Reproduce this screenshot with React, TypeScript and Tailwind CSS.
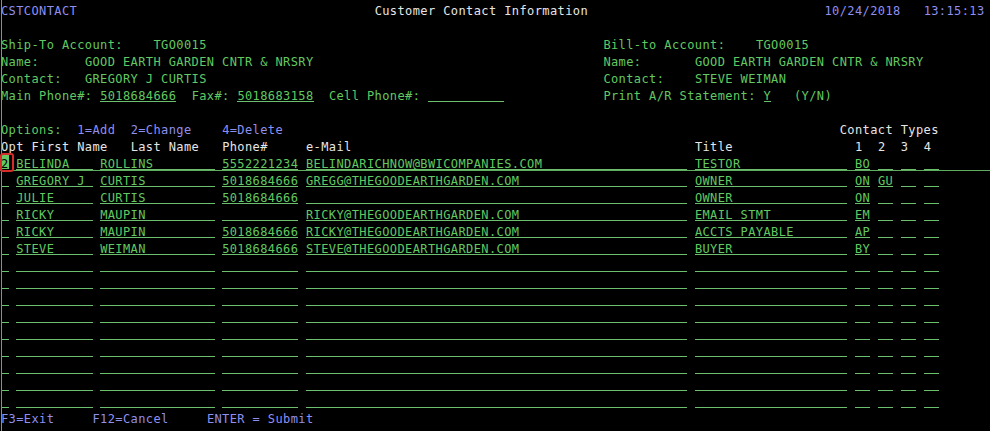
import React from "react";

type Contact = {
  opt: string;
  first: string;
  last: string;
  phone: string;
  email: string;
  title: string;
  t1: string;
  t2: string;
  t3: string;
  t4: string;
};

const contacts: Contact[] = [
  { opt: "2", first: "BELINDA", last: "ROLLINS", phone: "5552221234", email: "BELINDARICHNOW@BWICOMPANIES.COM", title: "TESTOR", t1: "BO", t2: "", t3: "", t4: "" },
  { opt: "", first: "GREGORY J", last: "CURTIS", phone: "5018684666", email: "GREGG@THEGOODEARTHGARDEN.COM", title: "OWNER", t1: "ON", t2: "GU", t3: "", t4: "" },
  { opt: "", first: "JULIE", last: "CURTIS", phone: "5018684666", email: "", title: "OWNER", t1: "ON", t2: "", t3: "", t4: "" },
  { opt: "", first: "RICKY", last: "MAUPIN", phone: "", email: "RICKY@THEGOODEARTHGARDEN.COM", title: "EMAIL STMT", t1: "EM", t2: "", t3: "", t4: "" },
  { opt: "", first: "RICKY", last: "MAUPIN", phone: "5018684666", email: "RICKY@THEGOODEARTHGARDEN.COM", title: "ACCTS PAYABLE", t1: "AP", t2: "", t3: "", t4: "" },
  { opt: "", first: "STEVE", last: "WEIMAN", phone: "5018684666", email: "STEVE@THEGOODEARTHGARDEN.COM", title: "BUYER", t1: "BY", t2: "", t3: "", t4: "" },
];

const empty: Contact = { opt: "", first: "", last: "", phone: "", email: "", title: "", t1: "", t2: "", t3: "", t4: "" };
const rows: Contact[] = [...contacts, ...Array.from({ length: 9 }, () => empty)];

const ROW = "grid grid-cols-[repeat(132,7.625px)] h-[17px]";
const TXT = "leading-[22px] whitespace-pre";
const GREEN = "text-[#62c962]";
const BLUE = "text-[#8f8ff0]";
const WHITE = "text-[#e6e6e6]";
const FLD = "h-[17px] leading-[22px] whitespace-pre border-b border-[#6cbf6c] text-[#62c962]";

function DataRow({ c, cursor }: { c: Contact; cursor: boolean }) {
  return (
    <div className={ROW}>
      {cursor ? (
        <div className="col-start-1 col-span-1 mt-[2px] h-[14px] leading-[18px] whitespace-pre bg-[#62c962] text-black">{c.opt}</div>
      ) : (
        <div className={`col-start-1 col-span-1 ${FLD}`}>{c.opt}</div>
      )}
      <div className={`col-start-3 col-span-10 ${FLD}`}>{c.first}</div>
      <div className={`col-start-14 col-span-15 ${FLD}`}>{c.last}</div>
      <div className={`col-start-30 col-span-10 ${FLD}`}>{c.phone}</div>
      <div className={`col-start-41 col-span-50 ${FLD}`}>{c.email}</div>
      <div className={`col-start-92 col-span-20 ${FLD}`}>{c.title}</div>
      <div className={`col-start-113 col-span-2 ${FLD}`}>{c.t1}</div>
      <div className={`col-start-116 col-span-2 ${FLD}`}>{c.t2}</div>
      <div className={`col-start-119 col-span-2 ${FLD}`}>{c.t3}</div>
      <div className={`col-start-122 col-span-2 ${FLD}`}>{c.t4}</div>
    </div>
  );
}

export default function App() {
  return (
    <div className="relative w-[990px] h-[431px] overflow-hidden bg-black font-['DejaVu_Sans_Mono','Liberation_Mono',monospace] text-[12px] tracking-[0.4px]">
      <div className="pl-px">
        {/* Row 0 */}
        <div className={ROW}>
          <div className={`col-start-1 col-span-10 ${TXT} ${BLUE}`}>CSTCONTACT</div>
          <div className={`col-start-50 col-span-28 ${TXT} ${WHITE}`}>Customer Contact Information</div>
          <div className={`col-start-109 col-span-10 ${TXT} ${BLUE}`}>10/24/2018</div>
          <div className={`col-start-122 col-span-8 ${TXT} ${BLUE}`}>13:15:13</div>
        </div>
        {/* Row 1 */}
        <div className={ROW}></div>
        {/* Row 2 */}
        <div className={ROW}>
          <div className={`col-start-1 col-span-16 ${TXT} ${GREEN}`}>Ship-To Account:</div>
          <div className={`col-start-21 col-span-7 ${TXT} ${GREEN}`}>TGO0015</div>
          <div className={`col-start-80 col-span-16 ${TXT} ${GREEN}`}>Bill-to Account:</div>
          <div className={`col-start-100 col-span-7 ${TXT} ${GREEN}`}>TGO0015</div>
        </div>
        {/* Row 3 */}
        <div className={ROW}>
          <div className={`col-start-1 col-span-5 ${TXT} ${GREEN}`}>Name:</div>
          <div className={`col-start-12 col-span-30 ${TXT} ${GREEN}`}>GOOD EARTH GARDEN CNTR &amp; NRSRY</div>
          <div className={`col-start-80 col-span-5 ${TXT} ${GREEN}`}>Name:</div>
          <div className={`col-start-92 col-span-30 ${TXT} ${GREEN}`}>GOOD EARTH GARDEN CNTR &amp; NRSRY</div>
        </div>
        {/* Row 4 */}
        <div className={ROW}>
          <div className={`col-start-1 col-span-8 ${TXT} ${GREEN}`}>Contact:</div>
          <div className={`col-start-12 col-span-16 ${TXT} ${GREEN}`}>GREGORY J CURTIS</div>
          <div className={`col-start-80 col-span-8 ${TXT} ${GREEN}`}>Contact:</div>
          <div className={`col-start-92 col-span-12 ${TXT} ${GREEN}`}>STEVE WEIMAN</div>
        </div>
        {/* Row 5 */}
        <div className={ROW}>
          <div className={`col-start-1 col-span-12 ${TXT} ${GREEN}`}>Main Phone#:</div>
          <div className={`col-start-14 col-span-10 ${FLD}`}>5018684666</div>
          <div className={`col-start-26 col-span-5 ${TXT} ${GREEN}`}>Fax#:</div>
          <div className={`col-start-32 col-span-10 ${FLD}`}>5018683158</div>
          <div className={`col-start-44 col-span-12 ${TXT} ${GREEN}`}>Cell Phone#:</div>
          <div className={`col-start-57 col-span-10 ${FLD}`}></div>
          <div className={`col-start-80 col-span-20 ${TXT} ${GREEN}`}>Print A/R Statement:</div>
          <div className={`col-start-101 col-span-1 ${FLD}`}>Y</div>
          <div className={`col-start-105 col-span-5 ${TXT} ${GREEN}`}>(Y/N)</div>
        </div>
        {/* Row 6 */}
        <div className={ROW}></div>
        {/* Row 7 */}
        <div className={ROW}>
          <div className={`col-start-1 col-span-8 ${TXT} ${GREEN}`}>Options:</div>
          <div className={`col-start-11 col-span-5 ${TXT} ${BLUE}`}>1=Add</div>
          <div className={`col-start-18 col-span-8 ${TXT} ${BLUE}`}>2=Change</div>
          <div className={`col-start-30 col-span-8 ${TXT} ${BLUE}`}>4=Delete</div>
          <div className={`col-start-111 col-span-13 ${TXT} ${WHITE}`}>Contact Types</div>
        </div>
        {/* Row 8 */}
        <div className={ROW}>
          <div className={`col-start-1 col-span-3 ${TXT} ${WHITE}`}>Opt</div>
          <div className={`col-start-5 col-span-10 ${TXT} ${WHITE}`}>First Name</div>
          <div className={`col-start-18 col-span-9 ${TXT} ${WHITE}`}>Last Name</div>
          <div className={`col-start-30 col-span-6 ${TXT} ${WHITE}`}>Phone#</div>
          <div className={`col-start-41 col-span-6 ${TXT} ${WHITE}`}>e-Mail</div>
          <div className={`col-start-92 col-span-5 ${TXT} ${WHITE}`}>Title</div>
          <div className={`col-start-113 col-span-1 ${TXT} ${WHITE}`}>1</div>
          <div className={`col-start-116 col-span-1 ${TXT} ${WHITE}`}>2</div>
          <div className={`col-start-119 col-span-1 ${TXT} ${WHITE}`}>3</div>
          <div className={`col-start-122 col-span-1 ${TXT} ${WHITE}`}>4</div>
        </div>
        {/* Rows 9-23 */}
        {rows.map((c, i) => (
          <DataRow key={i} c={c} cursor={i === 0} />
        ))}
        {/* Row 24 */}
        <div className={ROW}>
          <div className={`col-start-1 col-span-7 ${TXT} ${BLUE}`}>F3=Exit</div>
          <div className={`col-start-13 col-span-10 ${TXT} ${BLUE}`}>F12=Cancel</div>
          <div className={`col-start-28 col-span-14 ${TXT} ${BLUE}`}>ENTER = Submit</div>
        </div>
      </div>

      {/* Cursor crosshair ruler */}
      <div className="pointer-events-none absolute left-0 right-0 top-[170px] h-px bg-[#5fae5f]"></div>
      <div className="pointer-events-none absolute left-px top-0 bottom-0 w-px bg-[#5fae5f]"></div>
      {/* Cursor highlight box */}
      <div className="pointer-events-none absolute left-0 top-[153px] w-[14px] h-[19px] rounded-[3px] border-2 border-[#d42b2b]"></div>
    </div>
  );
}
